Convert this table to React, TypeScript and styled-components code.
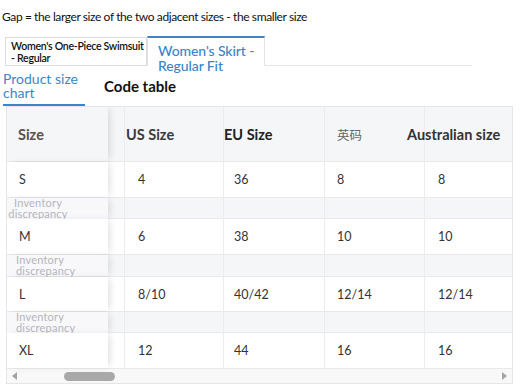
import React from "react";
import styled, { createGlobalStyle } from "styled-components";

const Global = createGlobalStyle`
  html, body { margin: 0; padding: 0; background: #fff; }
  body { font-family: Lato, "Noto Sans", "Noto Sans CJK SC", sans-serif; color: #222; }
  * { box-sizing: border-box; }
`;

const Page = styled.div`
  width: 524px;
  height: 388px;
  overflow: hidden;
  display: flex;
  flex-direction: column;
`;

const Note = styled.div`
  margin: 10px 0 0 2px;
  font-size: 12px;
  line-height: 14px;
  letter-spacing: -0.4px;
  color: #111;
  height: 26px;
`;

const TabBar = styled.div`
  display: flex;
  align-items: flex-end;
  margin-left: 5px;
  width: 467px;
  height: 30px;
  border-bottom: 1px solid #e6e6e6;
`;

const Tab = styled.div<{ $active?: boolean }>`
  height: ${(p) => (p.$active ? "30px" : "29px")};
  margin-bottom: -1px;
  background: #fff;
  border: 1px solid ${(p) => (p.$active ? "#e2e2e2" : "#dcdcdc")};
  border-top: ${(p) => (p.$active ? "2px solid #3a86c8" : "1px solid #dcdcdc")};
  border-bottom: ${(p) => (p.$active ? "1px solid #fff" : "1px solid #dcdcdc")};
  color: ${(p) => (p.$active ? "#3a86c8" : "#111")};
  font-size: ${(p) => (p.$active ? "14px" : "10.6px")};
  font-weight: ${(p) => (p.$active ? 500 : 600)};
  line-height: ${(p) => (p.$active ? "15px" : "11.5px")};
  padding: ${(p) => (p.$active ? "5px 0 0 10px" : "3px 0 0 5px")};
  width: ${(p) => (p.$active ? "118px" : "142px")};
  white-space: pre;
  letter-spacing: ${(p) => (p.$active ? "-0.1px" : "-0.3px")};
`;

const SubNav = styled.div`
  display: flex;
  align-items: flex-end;
  height: 40px;
`;

const SubTab = styled.div`
  width: 82px;
  margin-left: 3px;
  color: #3a86c8;
  font-size: 14px;
  line-height: 14px;
  padding-bottom: 4px;
  border-bottom: 2px solid #3a86c8;
`;

const SubTitle = styled.div`
  margin-left: 19px;
  margin-bottom: 11px;
  font-size: 15px;
  font-weight: 700;
  color: #111;
`;

const TableBox = styled.div`
  margin-left: 6px;
  width: 507px;
  border: 1px solid #e6e6e6;
  overflow: hidden;
`;

const Row = styled.div<{ $h: number; $bg?: string }>`
  display: grid;
  grid-template-columns: 101px 17px 99px 101px 100px 1fr;
  height: ${(p) => p.$h}px;
  background: ${(p) => p.$bg || "#fff"};
  border-bottom: 1px solid #e9e9ec;
`;

const Cell = styled.div<{ $pad?: number; $strong?: boolean; $cjk?: boolean; $dark?: string }>`
  display: flex;
  align-items: center;
  padding-left: ${(p) => p.$pad ?? 12}px;
  border-right: 1px solid #ececef;
  font-size: ${(p) => (p.$strong ? "14.5px" : "12.5px")};
  font-weight: ${(p) => (p.$strong ? 700 : 400)};
  color: ${(p) => p.$dark || (p.$cjk ? "#666" : "#333")};
  white-space: nowrap;
  overflow: visible;
  min-width: 0;
  &:last-child { border-right: none; }
`;

const StickyCell = styled(Cell)`
  position: relative;
  z-index: 1;
  border-right: none;
  box-shadow: 4px 0 7px -2px rgba(0, 0, 0, 0.12);
`;

const Spacer = styled.div`
  border-right: 1px solid #ececef;
`;

const NoteText = styled.div<{ $center?: boolean }>`
  font-size: 11px;
  line-height: 10.5px;
  color: #b5b5ba;
  white-space: normal;
  width: ${(p) => (p.$center ? "62px" : "70px")};
  text-align: ${(p) => (p.$center ? "center" : "left")};
  margin-left: ${(p) => (p.$center ? "-6px" : "3px")};
  letter-spacing: 0.2px;
`;

const ScrollBar = styled.div`
  height: 14px;
  display: flex;
  align-items: center;
  background: #f8f8f8;
  padding: 0 5px;
`;

const Arrow = styled.div<{ $right?: boolean }>`
  width: 0;
  height: 0;
  border-top: 4px solid transparent;
  border-bottom: 4px solid transparent;
  ${(p) => (p.$right ? "border-left: 5px solid #a3a3a3;" : "border-right: 5px solid #a3a3a3;")}
  margin-left: ${(p) => (p.$right ? "auto" : "0")};
`;

const Thumb = styled.div`
  width: 51px;
  height: 9px;
  margin-left: 47px;
  border-radius: 5px;
  background: #a9a9a9;
`;

const HEAD_BG = "#f5f6f8";

type DataRow = { size: string; vals: string[] };
const rows: DataRow[] = [
  { size: "S", vals: ["4", "36", "8", "8"] },
  { size: "M", vals: ["6", "38", "10", "10"] },
  { size: "L", vals: ["8/10", "40/42", "12/14", "12/14"] },
  { size: "XL", vals: ["12", "44", "16", "16"] },
];
const heights = [36, 36, 35, 36];
const subHeights = [21, 22, 21];
const dataPad = [13, 10, 12, 13];

export default function App() {
  return (
    <Page>
      <Global />
      <Note>Gap = the larger size of the two adjacent sizes - the smaller size</Note>
      <TabBar>
        <Tab>{"Women's One-Piece Swimsuit\n- Regular"}</Tab>
        <Tab $active>{"Women's Skirt -\nRegular Fit"}</Tab>
      </TabBar>
      <SubNav>
        <SubTab>Product size chart</SubTab>
        <SubTitle>Code table</SubTitle>
      </SubNav>
      <TableBox>
        <Row $h={55} $bg={HEAD_BG}>
          <StickyCell $strong $pad={11} $dark="#5b504c" style={{ background: HEAD_BG }}>Size</StickyCell>
          <Spacer />
          <Cell $strong $pad={1} $dark="#3a3a3a">US Size</Cell>
          <Cell $strong $pad={0} $dark="#222">EU Size</Cell>
          <Cell $cjk $pad={12}>英码</Cell>
          <Cell $strong $pad={0} $dark="#333"><span style={{ marginLeft: -18 }}>Australian size</span></Cell>
        </Row>
        {rows.map((r, i) => (
          <React.Fragment key={r.size}>
            <Row $h={heights[i]}>
              <StickyCell $pad={12} style={{ background: "#fff" }}>{r.size}</StickyCell>
              <Spacer />
              {r.vals.map((v, j) => (
                <Cell key={j} $pad={dataPad[j]}>{v}</Cell>
              ))}
            </Row>
            {i < 3 && (
              <Row $h={subHeights[i]} $bg={HEAD_BG}>
                <StickyCell $pad={6} style={{ background: "#f8f8fa" }}>
                  <NoteText $center={i === 0}>Inventory discrepancy</NoteText>
                </StickyCell>
                <Spacer />
                <Cell />
                <Cell />
                <Cell />
                <Cell />
              </Row>
            )}
          </React.Fragment>
        ))}
        <ScrollBar>
          <Arrow />
          <Thumb />
          <Arrow $right />
        </ScrollBar>
      </TableBox>
    </Page>
  );
}
